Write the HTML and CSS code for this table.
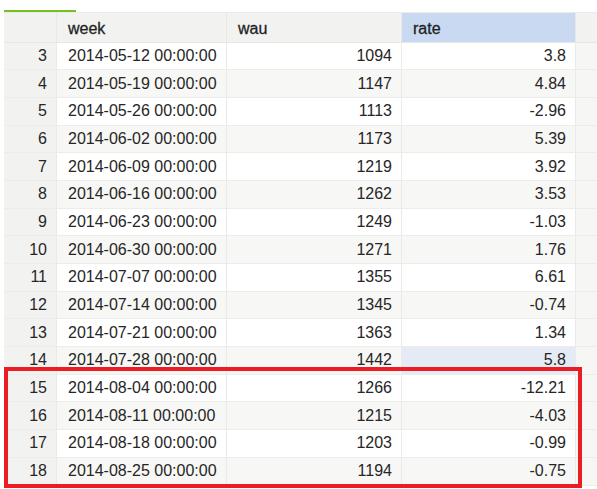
FILE: index.html
```html
<!DOCTYPE html>
<html>
<head>
<meta charset="utf-8">
<link rel="stylesheet" href="styles.css">
</head>
<body>
<div class="page">
  <div class="tabs"><div class="tab-active"></div></div>
  <div class="grid">
    <div class="row head">
      <div class="c num"></div>
      <div class="c txt">week</div>
      <div class="c txt">wau</div>
      <div class="c txt sel-head">rate</div>
      <div class="fill"></div>
    </div>
    <div class="row"><div class="c num">3</div><div class="c txt">2014-05-12 00:00:00</div><div class="c r">1094</div><div class="c r">3.8</div><div class="fill"></div></div>
    <div class="row alt"><div class="c num">4</div><div class="c txt">2014-05-19 00:00:00</div><div class="c r">1147</div><div class="c r">4.84</div><div class="fill"></div></div>
    <div class="row"><div class="c num">5</div><div class="c txt">2014-05-26 00:00:00</div><div class="c r">1113</div><div class="c r">-2.96</div><div class="fill"></div></div>
    <div class="row alt"><div class="c num">6</div><div class="c txt">2014-06-02 00:00:00</div><div class="c r">1173</div><div class="c r">5.39</div><div class="fill"></div></div>
    <div class="row"><div class="c num">7</div><div class="c txt">2014-06-09 00:00:00</div><div class="c r">1219</div><div class="c r">3.92</div><div class="fill"></div></div>
    <div class="row alt"><div class="c num">8</div><div class="c txt">2014-06-16 00:00:00</div><div class="c r">1262</div><div class="c r">3.53</div><div class="fill"></div></div>
    <div class="row"><div class="c num">9</div><div class="c txt">2014-06-23 00:00:00</div><div class="c r">1249</div><div class="c r">-1.03</div><div class="fill"></div></div>
    <div class="row alt"><div class="c num">10</div><div class="c txt">2014-06-30 00:00:00</div><div class="c r">1271</div><div class="c r">1.76</div><div class="fill"></div></div>
    <div class="row"><div class="c num">11</div><div class="c txt">2014-07-07 00:00:00</div><div class="c r">1355</div><div class="c r">6.61</div><div class="fill"></div></div>
    <div class="row alt"><div class="c num">12</div><div class="c txt">2014-07-14 00:00:00</div><div class="c r">1345</div><div class="c r">-0.74</div><div class="fill"></div></div>
    <div class="row"><div class="c num">13</div><div class="c txt">2014-07-21 00:00:00</div><div class="c r">1363</div><div class="c r">1.34</div><div class="fill"></div></div>
    <div class="row alt"><div class="c num">14</div><div class="c txt">2014-07-28 00:00:00</div><div class="c r">1442</div><div class="c r sel">5.8</div><div class="fill"></div></div>
    <div class="row"><div class="c num">15</div><div class="c txt">2014-08-04 00:00:00</div><div class="c r">1266</div><div class="c r">-12.21</div><div class="fill"></div></div>
    <div class="row alt"><div class="c num">16</div><div class="c txt">2014-08-11 00:00:00</div><div class="c r">1215</div><div class="c r">-4.03</div><div class="fill"></div></div>
    <div class="row"><div class="c num">17</div><div class="c txt">2014-08-18 00:00:00</div><div class="c r">1203</div><div class="c r">-0.99</div><div class="fill"></div></div>
    <div class="row alt"><div class="c num">18</div><div class="c txt">2014-08-25 00:00:00</div><div class="c r">1194</div><div class="c r">-0.75</div><div class="fill"></div></div>
  </div>
  <div class="highlight"></div>
</div>
</body>
</html>
```

FILE: styles.css
```css
html, body {
  margin: 0;
  padding: 0;
  background: #ffffff;
  overflow: hidden;
}
body {
  font-family: "Liberation Sans", Arial, sans-serif;
  font-size: 16px;
  color: #262626;
}
.page {
  position: relative;
  width: 597px;
  height: 489px;
  padding-left: 4px;
  box-sizing: border-box;
}
.tabs {
  height: 13px;
  border-bottom: 1px solid #ebebe9;
  box-sizing: border-box;
  display: flex;
  align-items: flex-end;
}
.tab-active {
  width: 72px;
  height: 2px;
  background: #75c21f;
}
.grid {
  display: flex;
  flex-direction: column;
}
.row {
  display: grid;
  grid-template-columns: 53px 170px 175px 174px 1fr;
  height: 27.7px;
  background: #ffffff;
}
.row.alt {
  background: #f7f7f5;
}
.row.head {
  height: 29.5px;
  background: #f2f3f1;
}
.c {
  box-sizing: border-box;
  border-right: 1px solid #eaeae8;
  border-bottom: 1px solid #ececea;
  display: flex;
  align-items: center;
  white-space: nowrap;
  overflow: hidden;
}
.head .c {
  border-bottom: 1px solid #e6e6e4;
  border-right: 1px solid #e8e8e6;
  padding-top: 3px;
  color: #1f1f1f;
  -webkit-text-stroke: 0.3px #1f1f1f;
}
.num {
  background: #f2f3f1;
  justify-content: flex-end;
  padding-right: 9px;
}
.txt {
  padding-left: 11px;
}
.r {
  justify-content: flex-end;
  padding-right: 9px;
}
.sel-head {
  background: #c8d9f1;
}
.sel {
  background: #e5ebf5;
}
.fill {
  background: #f6f6f4;
  border-bottom: 1px solid #ececea;
}
.head .fill {
  background: #f2f3f1;
  border-bottom: 1px solid #e6e6e4;
}
.highlight {
  position: absolute;
  left: 4px;
  top: 367px;
  width: 578px;
  height: 121px;
  box-sizing: border-box;
  border: 4.5px solid #ec1c24;
}
```
